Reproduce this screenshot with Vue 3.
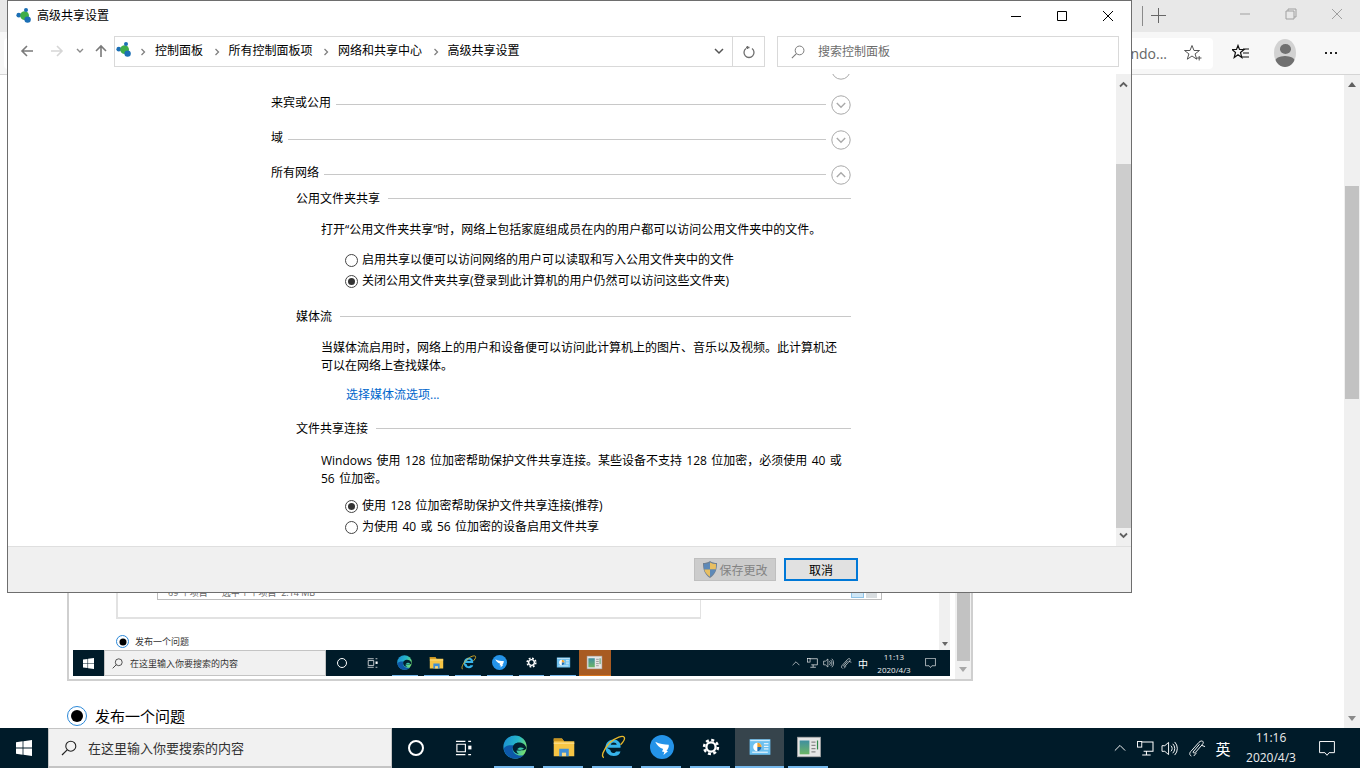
<script setup>
const crumbs = ['控制面板', '所有控制面板项', '网络和共享中心', '高级共享设置']
const apps = [
  { id: 'edge', under: true },
  { id: 'folder' },
  { id: 'ie' },
  { id: 'ding' },
  { id: 'gear' },
  { id: 'cpanel', active: true },
  { id: 'appwin', attention: true },
]
</script>

<template>
  <div class="screen">
    <svg class="defs" width="0" height="0">
      <defs>
        <linearGradient id="edgeG" x1="0" y1="0" x2="1" y2="0.4">
          <stop offset="0" stop-color="#1a8ad4" />
          <stop offset="0.6" stop-color="#25b6c9" />
          <stop offset="1" stop-color="#6fdc76" />
        </linearGradient>
        <linearGradient id="appG" x1="0" y1="0" x2="0" y2="1">
          <stop offset="0" stop-color="#3f8fa0" />
          <stop offset="1" stop-color="#6cb565" />
        </linearGradient>
        <symbol id="net" viewBox="0 0 16 16">
          <circle cx="2.8" cy="7.2" r="2.4" fill="#1b6fb5" />
          <circle cx="8.6" cy="7.6" r="4.4" fill="#3fae49" />
          <circle cx="10" cy="2" r="2" fill="#1b6fb5" />
          <circle cx="11.6" cy="11.6" r="3.2" fill="#1b6fb5" />
        </symbol>
        <symbol id="cdown" viewBox="0 0 20 20">
          <circle cx="10" cy="10" r="9.2" fill="#fff" stroke="#a9a9a9" />
          <path d="M5.8 8l4.2 4.2L14.2 8" fill="none" stroke="#a9a9a9" stroke-width="1.4" />
        </symbol>
        <symbol id="cup" viewBox="0 0 20 20">
          <circle cx="10" cy="10" r="9.2" fill="#fff" stroke="#a9a9a9" />
          <path d="M5.8 12L10 7.8 14.2 12" fill="none" stroke="#a9a9a9" stroke-width="1.4" />
        </symbol>
        <symbol id="win" viewBox="0 0 16 16">
          <path d="M0 2.2l6.6-.9v6.3H0zM7.4 1.2L16 0v7.6H7.4zM0 8.4h6.6v6.3L0 13.8zM7.4 8.4H16V16l-8.6-1.2z" fill="#fff" />
        </symbol>
        <symbol id="mag" viewBox="0 0 16 16">
          <circle cx="9.8" cy="6.2" r="5" fill="none" stroke="currentColor" stroke-width="1.1" />
          <path d="M6.2 9.8L1 15" stroke="currentColor" stroke-width="1.2" />
        </symbol>
        <symbol id="taskview" viewBox="0 0 18 16">
          <path d="M1 1h10M1 15h10M2 4h9v8H2z" fill="none" stroke="#fff" stroke-width="1.2" />
          <path d="M14 1h3M14 15h3" stroke="#fff" stroke-width="1.2" />
          <rect x="14" y="5.5" width="3.4" height="4" fill="#fff" />
        </symbol>
        <symbol id="edge" viewBox="0 0 32 32">
          <circle cx="16" cy="16" r="15.5" fill="url(#edgeG)" />
          <path d="M1 18c1 8 7 13.500 15 13.500 5 0 9-2 12-5-4 1.500-9 1-12-1.500-4-3-4-8-1-11-6-1-12 0-14 4z" fill="#0d58a8" />
          <path d="M13 17c0-4 4-7 8-7 4.500 0 9 2.500 10 7 .3 3-4 3.500-8 3.500h-5c0 2.500 2 4 4 4.500-5 .5-9-3-9-8z" fill="#02202f" />
          <path d="M19 19c2-3 6-3 9-1-2 2-6 2.500-9 1z" fill="#39c6a8" />
        </symbol>
        <symbol id="folder" viewBox="-3 -3 38 33">
          <path d="M1 1h12l3 4h15v22H1z" fill="#f6c544" />
          <path d="M1 1h12l3 4H1z" fill="#c99320" />
          <path d="M1 7h30v2H1z" fill="#fbdc85" />
          <path d="M9 16h14v11h-4v-5h-6v5H9z" fill="#3d8ed8" />
          <path d="M13 22h6v5h-6z" fill="#f4d98a" />
        </symbol>
        <symbol id="ie" viewBox="0 0 32 32">
          <path d="M8 17h18c1-7-4-11-9-11-6 0-11 4-11 11s5 11 11 11c5 0 8-2 9-6h-6c-1 1.500-2 2-3.500 2-2.500 0-4-2-4-4z" fill="#37b4ea" />
          <path d="M13 13c.5-2 2-3 4-3s3.500 1 4 3z" fill="#02202f" />
          <path d="M4 30C0 30 2 20 12 10 20 3 29 0 31 3c1.500 3-3 8-5 10" fill="none" stroke="#e9b92a" stroke-width="1.800" />
        </symbol>
        <symbol id="ding" viewBox="0 0 32 32">
          <circle cx="16" cy="16" r="16" fill="#2493e8" />
          <path d="M7 9c6 3 12 4 18 4 .5 3-1 6-3 8l2 .5-6 5 1-4-3-.5 1.500-3.500C12 17 9 13 7 9z" fill="#fff" />
        </symbol>
        <symbol id="gear" viewBox="-5 -5 34 34">
          <circle cx="12" cy="12" r="6.500" fill="none" stroke="#fff" stroke-width="3.200" />
          <circle cx="12" cy="12" r="9.800" fill="none" stroke="#fff" stroke-width="3.600" stroke-dasharray="4.200 3.500" />
        </symbol>
        <symbol id="cpanel" viewBox="-4 -6 40 36">
          <rect width="32" height="24" fill="#6cc0ef" />
          <rect x="1" y="1" width="30" height="2" fill="#cfeafa" />
          <circle cx="12" cy="12" r="6.500" fill="#fff" />
          <path d="M12 12V5.500a6.500 6.500 0 0 1 6.500 6.500z" fill="#f0a22e" />
          <path d="M12 12h6.500a6.500 6.500 0 0 1-6.500 6.500z" fill="#1f6fb5" />
          <path d="M22 7h7M22 11h7M22 15h7M4 20h24" stroke="#fff" stroke-width="1.500" />
        </symbol>
        <symbol id="appwin" viewBox="-2 -2 32 28">
          <rect width="28" height="24" fill="#e6e6e6" stroke="#aaa" />
          <rect x="2.500" y="4" width="12" height="17" fill="url(#appG)" />
          <path d="M17 6h5M17 10h5M17 14h5M17 18h5" stroke="#8a8a8a" stroke-width="1.500" />
          <path d="M24.500 4v11" stroke="#2e8a4a" stroke-width="1.500" />
        </symbol>
        <symbol id="tray-up" viewBox="0 0 14 8">
          <path d="M1 7l6-6 6 6" fill="none" stroke="#fff" stroke-width="1.100" />
        </symbol>
        <symbol id="tray-net" viewBox="0 0 18 16">
          <path d="M3 1h14v10H7M10 11v3.500M5.500 15h9" fill="none" stroke="#fff" stroke-width="1.100" />
          <rect x="0.500" y="0.500" width="4.500" height="6" fill="#001b2a" stroke="#fff" />
        </symbol>
        <symbol id="tray-vol" viewBox="0 0 18 16">
          <path d="M1 5h3l4-3.500v13L4 11H1zM10.500 5a4 4 0 0 1 0 6M12.500 3a7 7 0 0 1 0 10M14.500 1a10 10 0 0 1 0 14" fill="none" stroke="#fff" stroke-width="1" />
        </symbol>
        <symbol id="tray-pen" viewBox="0 0 18 18">
          <path d="M2.500 17c-2.500-1-2-4 0-5.500l8-9c1.500-1.700 4-2 4.500-.5.500 1.200-.5 2.500-1.500 3.500l-6.500 7.500c-1 1-2.500 1-2.800-.2l7-8.300M5 17l3-3.500M13 5.500l4 1.500" fill="none" stroke="#fff" stroke-width="1" />
        </symbol>
        <symbol id="tray-msg" viewBox="0 0 18 17">
          <path d="M.6.600h16.800v12.600h-6l-2.400 3-2.400-3h-6z" fill="none" stroke="#fff" stroke-width="1.100" />
        </symbol>
      </defs>
    </svg>

    <div class="browser">
      <div class="tabstrip">
        <span class="tab-sep"></span>
        <svg class="tab-plus" width="15" height="15" viewBox="0 0 15 15"><path d="M7.500 0v15M0 7.500h15" stroke="#666" /></svg>
        <div class="win-btns">
          <svg width="12" height="12" viewBox="0 0 12 12"><path d="M1 6h10" stroke="#a0a0a0" /></svg>
          <svg width="12" height="12" viewBox="0 0 12 12"><path d="M3 3V1h8v8H9M1 3h8v8H1z" fill="none" stroke="#a0a0a0" /></svg>
          <svg width="12" height="12" viewBox="0 0 12 12"><path d="M1 1l10 10M11 1L1 11" stroke="#a0a0a0" /></svg>
        </div>
      </div>
      <div class="toolbar">
        <div class="urlbar">
          <span class="url-text">ndo...</span>
          <svg class="url-star" width="18" height="18" viewBox="0 0 18 18"><path d="M8 1.500l2 5h5.500l-4.400 3.400 1.600 5.300L8 12l-4.700 3.200 1.600-5.300L.5 6.500H6z" fill="none" stroke="#555" /><path d="M13 14h4.500M15.200 12v4.500" stroke="#555" /></svg>
        </div>
        <svg class="fav" width="18" height="18" viewBox="0 0 18 18"><path d="M6 1.500l1.500 4H12L8.500 8.500l1.300 5L6 10.800 2.200 13.500l1.300-5L0 5.500h4.500z" fill="none" stroke="#111" stroke-width="1.200" /><path d="M11 5h6M11 9h6M10 13h7" stroke="#111" /></svg>
        <div class="avatar">
          <span class="avatar-head"></span>
          <span class="avatar-body"></span>
        </div>
        <div class="more"><i></i><i></i><i></i></div>
      </div>
      <div class="page">
        <div class="page-main">
          <div class="shot">
            <div class="shot-main">
              <div class="shot-top">
                <div class="shot-doc">
                  <div class="frame">
                    <div class="status">
                      <span>69 个项目</span>
                      <span>选中 1 个项目&nbsp; 2.14 MB</span>
                      <span class="status-views"><i class="on"></i><i></i></span>
                    </div>
                  </div>
                  <div class="small-radio">
                    <span class="radio-blue"></span>
                    发布一个问题
                  </div>
                </div>
                <div class="mini-scroll"><span class="tri-down"></span></div>
              </div>
              <div class="taskbar small">
                <div class="start"><svg width="11" height="11"><use href="#win" /></svg></div>
                <div class="search">
                  <svg width="11" height="11"><use href="#mag" /></svg>
                  <span>在这里输入你要搜索的内容</span>
                </div>
                <div class="tb-btn sys"><span class="cortana"></span></div>
                <div class="tb-btn sys"><svg width="11" height="10"><use href="#taskview" /></svg></div>
                <div
                  v-for="app in apps"
                  :key="app.id"
                  class="tb-btn app"
                  :class="{ attention: app.attention }"
                >
                  <svg class="app-icon"><use :href="'#' + app.id" /></svg>
                </div>
                <div class="tray">
                  <svg class="t-up"><use href="#tray-up" /></svg>
                  <svg class="t-net"><use href="#tray-net" /></svg>
                  <svg class="t-vol"><use href="#tray-vol" /></svg>
                  <svg class="t-pen"><use href="#tray-pen" /></svg>
                  <span class="ime">中</span>
                  <div class="clock"><div>11:13</div><div>2020/4/3</div></div>
                  <svg class="t-msg"><use href="#tray-msg" /></svg>
                </div>
              </div>
            </div>
            <div class="shot-scroll">
              <span class="thumb"></span>
              <span class="tri-down"></span>
            </div>
          </div>
          <div class="big-radio">
            <span class="radio-blue"></span>
            发布一个问题
          </div>
        </div>
        <div class="page-scroll">
          <span class="tri-up"></span>
          <span class="page-thumb"></span>
          <span class="tri-down"></span>
        </div>
      </div>
    </div>

    <div class="taskbar">
      <div class="start"><svg width="16" height="16"><use href="#win" /></svg></div>
      <div class="search">
        <svg width="16" height="16"><use href="#mag" /></svg>
        <span>在这里输入你要搜索的内容</span>
      </div>
      <div class="tb-btn sys"><span class="cortana"></span></div>
      <div class="tb-btn sys"><svg width="17" height="16"><use href="#taskview" /></svg></div>
      <div
        v-for="app in apps"
        :key="app.id"
        class="tb-btn app"
        :class="{ active: app.active }"
      >
        <svg class="app-icon"><use :href="'#' + app.id" /></svg>
      </div>
      <div class="tray">
        <svg class="t-up"><use href="#tray-up" /></svg>
        <svg class="t-net"><use href="#tray-net" /></svg>
        <svg class="t-vol"><use href="#tray-vol" /></svg>
        <svg class="t-pen"><use href="#tray-pen" /></svg>
        <span class="ime">英</span>
        <div class="clock"><div>11:16</div><div>2020/4/3</div></div>
        <svg class="t-msg"><use href="#tray-msg" /></svg>
      </div>
    </div>

    <div class="dialog">
      <div class="titlebar">
        <svg width="16" height="16"><use href="#net" /></svg>
        <span class="title">高级共享设置</span>
        <div class="caption">
          <svg width="12" height="12" viewBox="0 0 12 12"><path d="M1 6.500h10" stroke="#000" /></svg>
          <svg width="12" height="12" viewBox="0 0 12 12"><path d="M1.500 1.500h9v9h-9z" fill="none" stroke="#000" /></svg>
          <svg width="12" height="12" viewBox="0 0 12 12"><path d="M1 1l10 10M11 1L1 11" stroke="#000" /></svg>
        </div>
      </div>

      <div class="navbar">
        <svg class="nav-back" width="14" height="14" viewBox="0 0 14 14"><path d="M13 7H2M7 2L2 7l5 5" fill="none" stroke="#7a7a7a" stroke-width="1.600" /></svg>
        <svg class="nav-fwd" width="14" height="14" viewBox="0 0 14 14"><path d="M1 7h11M7 2l5 5-5 5" fill="none" stroke="#d6d6d6" stroke-width="1.600" /></svg>
        <svg class="nav-drop" width="8" height="6" viewBox="0 0 8 6"><path d="M1 1l3 3 3-3" fill="none" stroke="#8a8a8a" stroke-width="1.400" /></svg>
        <svg class="nav-up" width="14" height="14" viewBox="0 0 14 14"><path d="M7 13V2M2 7l5-5 5 5" fill="none" stroke="#7a7a7a" stroke-width="1.600" /></svg>
        <div class="address">
          <svg class="addr-icon" width="16" height="16"><use href="#net" /></svg>
          <template v-for="c in crumbs" :key="c">
            <svg class="crumb-sep" width="6" height="8" viewBox="0 0 6 8"><path d="M1.500 1l3 3-3 3" fill="none" stroke="#808080" stroke-width="1.300" /></svg>
            <span class="crumb">{{ c }}</span>
          </template>
          <svg class="addr-drop" width="10" height="7" viewBox="0 0 10 7"><path d="M1 1l4 4 4-4" fill="none" stroke="#555" stroke-width="1.500" /></svg>
          <div class="refresh">
            <svg width="12" height="14" viewBox="0 0 12 14"><path d="M3 2.500h3.500M4.500 1v3M9 3.500A5 5 0 1 1 3 3.500" fill="none" stroke="#6e6e6e" stroke-width="1.300" /></svg>
          </div>
        </div>
        <div class="searchbox">
          <svg class="search-mag" width="14" height="14"><use href="#mag" /></svg>
          <span>搜索控制面板</span>
        </div>
      </div>

      <div class="body">
        <div class="content">
          <div class="group clipped">
            <span class="line"></span>
            <svg class="toggle"><use href="#cdown" /></svg>
          </div>
          <div class="group">
            <span class="group-name">来宾或公用</span>
            <span class="line"></span>
            <svg class="toggle"><use href="#cdown" /></svg>
          </div>
          <div class="group">
            <span class="group-name">域</span>
            <span class="line"></span>
            <svg class="toggle"><use href="#cdown" /></svg>
          </div>
          <div class="group">
            <span class="group-name">所有网络</span>
            <span class="line"></span>
            <svg class="toggle"><use href="#cup" /></svg>
          </div>

          <div class="section first">
            <div class="sec-head"><span>公用文件夹共享</span><span class="line"></span></div>
            <p class="para">打开“公用文件夹共享”时，网络上包括家庭组成员在内的用户都可以访问公用文件夹中的文件。</p>
            <div class="options">
              <label class="opt"><span class="radio"></span>启用共享以便可以访问网络的用户可以读取和写入公用文件夹中的文件</label>
              <label class="opt"><span class="radio checked"></span>关闭公用文件夹共享(登录到此计算机的用户仍然可以访问这些文件夹)</label>
            </div>
          </div>

          <div class="section media">
            <div class="sec-head"><span>媒体流</span><span class="line"></span></div>
            <p class="para">当媒体流启用时，网络上的用户和设备便可以访问此计算机上的图片、音乐以及视频。此计算机还可以在网络上查找媒体。</p>
            <a class="link">选择媒体流选项...</a>
          </div>

          <div class="section conn">
            <div class="sec-head"><span>文件共享连接</span><span class="line"></span></div>
            <p class="para">Windows 使用 128 位加密帮助保护文件共享连接。某些设备不支持 128 位加密，必须使用 40 或 56 位加密。</p>
            <div class="options">
              <label class="opt"><span class="radio checked"></span>使用 128 位加密帮助保护文件共享连接(推荐)</label>
              <label class="opt"><span class="radio"></span>为使用 40 或 56 位加密的设备启用文件共享</label>
            </div>
          </div>
        </div>
        <div class="vscroll">
          <svg width="9" height="7" viewBox="0 0 9 7"><path d="M1 5.500l3.500-3.500L8 5.500" fill="none" stroke="#606060" stroke-width="1.800" /></svg>
          <span class="vthumb"></span>
          <svg width="9" height="7" viewBox="0 0 9 7"><path d="M1 1.500L4.500 5 8 1.500" fill="none" stroke="#606060" stroke-width="1.800" /></svg>
        </div>
      </div>

      <div class="footer">
        <button class="btn save">
          <svg width="16" height="17" viewBox="0 0 16 17">
            <path d="M8 0c2 1.500 4.500 2 7 2 0 6-1 11-7 15C2 13 1 8 1 2c2.500 0 5-.5 7-2z" fill="#6f7f92" />
            <path d="M8 1.500V8.500H2.200C2 6.500 2 5 2 3c2 0 4-.5 6-1.500z" fill="#5d89b8" />
            <path d="M8 1.500c2 1 4 1.500 6 1.500 0 2 0 3.500-.3 5.500H8z" fill="#e8bf62" />
            <path d="M8 8.500h5.700C13 11.500 11 14 8 15.800z" fill="#5d89b8" />
            <path d="M8 8.500v7.300C5 14 3 11.500 2.300 8.500z" fill="#e8bf62" />
          </svg>
          保存更改
        </button>
        <button class="btn cancel">取消</button>
      </div>
    </div>
  </div>
</template>

<style scoped>
.screen {
  position: relative;
  width: 1360px;
  height: 768px;
  overflow: hidden;
  display: flex;
  flex-direction: column;
  background: #fff;
  color: #000;
  font-family: "Open Sans", "Noto Sans CJK SC", sans-serif;
  font-size: 12px;
}

.defs {
  position: absolute;
}

svg {
  display: block;
  flex: none;
}

/* browser behind the dialog */
.browser {
  flex: 1;
  min-height: 0;
  display: flex;
  flex-direction: column;
}

.tabstrip {
  height: 32px;
  background: #e8e8e8;
  display: flex;
  align-items: center;
  padding-left: 1142px;
}

.tab-sep {
  width: 1px;
  height: 20px;
  background: #8a8a8a;
}

.tab-plus {
  margin-left: 8px;
  margin-top: -2px;
}

.win-btns {
  margin-left: auto;
  margin-right: 17px;
  margin-top: -4px;
  display: flex;
  gap: 34px;
}

.toolbar {
  height: 43px;
  box-sizing: border-box;
  background: #f7f7f7;
  border-bottom: 1px solid #d5d5d5;
  display: flex;
  align-items: center;
}

.urlbar {
  width: 1209px;
  height: 31px;
  margin-left: 4px;
  background: #fff;
  border-radius: 4px;
  display: flex;
  align-items: center;
  justify-content: flex-end;
  padding-right: 11px;
  box-sizing: border-box;
}

.url-text {
  font-size: 14px;
  color: #666;
  margin-right: 17px;
}

.fav {
  margin-left: 19px;
}

.avatar {
  width: 22px;
  height: 28px;
  margin-left: 24px;
  border-radius: 50%;
  background: #d2d2d2;
  overflow: hidden;
  display: flex;
  flex-direction: column;
  align-items: center;
}

.avatar-head {
  width: 11px;
  height: 12px;
  margin-top: 5px;
  border-radius: 50%;
  background: #707070;
}

.avatar-body {
  width: 20px;
  height: 14px;
  margin-top: 2px;
  border-radius: 50%;
  background: #707070;
}

.more {
  margin-left: 29px;
  display: flex;
  gap: 3px;
}

.more i {
  width: 2px;
  height: 2px;
  background: #222;
}

.page {
  flex: 1;
  min-height: 0;
  display: flex;
}

.page-main {
  flex: 1;
  min-width: 0;
  padding-left: 67px;
}

.page-scroll {
  width: 16px;
  background: #f0f0f0;
  display: flex;
  flex-direction: column;
  align-items: center;
  padding: 7px 0;
  box-sizing: border-box;
}

.page-thumb {
  width: 14px;
  height: 213px;
  margin-top: 99px;
  margin-bottom: auto;
  background: #c2c2c2;
}

.tri-up,
.tri-down {
  width: 0;
  height: 0;
  border-left: 4px solid transparent;
  border-right: 4px solid transparent;
}

.tri-up {
  border-bottom: 5px solid #606060;
}

.tri-down {
  border-top: 5px solid #8a8a8a;
}

/* screenshot embedded in the page */
.shot {
  width: 906px;
  height: 606px;
  box-sizing: border-box;
  border: 2px solid #cfcfcf;
  border-top: none;
  display: flex;
  background: #fff;
}

.shot-main {
  flex: 1;
  min-width: 0;
  display: flex;
  flex-direction: column;
  padding: 0 5px 3px 4px;
}

.shot-top {
  flex: 1;
  min-height: 0;
  display: flex;
}

.shot-doc {
  flex: 1;
  display: flex;
  flex-direction: column;
  justify-content: flex-end;
}

.frame {
  width: 585px;
  height: 400px;
  margin-left: 43px;
  border: 1px solid #e2e2e2;
  border-top: none;
  border-width: 0 1px 2px 2px;
  box-sizing: border-box;
  display: flex;
  flex-direction: column;
  justify-content: flex-end;
  padding-bottom: 17px;
}

.status {
  width: 725px;
  height: 14px;
  margin-left: 39px;
  box-sizing: border-box;
  border: 1px solid #bdbdbd;
  border-top: none;
  padding-left: 10px;
  display: flex;
  align-items: center;
  gap: 14px;
  font-size: 9px;
  line-height: 12px;
  color: #666;
  background: #fff;
}

.status-views {
  display: flex;
  gap: 2px;
  margin-left: auto;
  margin-right: 4px;
}

.status-views i {
  width: 11px;
  height: 11px;
  background: #d8dde0;
}

.status-views i.on {
  width: 13px;
  background: #cfe6f5;
  border: 1px solid #8fc4e8;
  box-sizing: border-box;
}

.small-radio {
  height: 31px;
  margin-left: 43px;
  padding-top: 14px;
  box-sizing: border-box;
  display: flex;
  align-items: center;
  gap: 6px;
  font-size: 9px;
  color: #333;
}

.small-radio .radio-blue {
  width: 13px;
  height: 13px;
  border-width: 1px;
}

.small-radio .radio-blue::after {
  width: 7px;
  height: 7px;
}

.radio-blue {
  position: relative;
  display: block;
  width: 20px;
  height: 20px;
  box-sizing: border-box;
  border: 1.500px solid #2b88d8;
  border-radius: 50%;
  background: #fff;
}

.radio-blue::after {
  content: "";
  position: absolute;
  left: 50%;
  top: 50%;
  width: 12px;
  height: 12px;
  transform: translate(-50%, -50%);
  border-radius: 50%;
  background: #000;
}

.mini-scroll {
  width: 11px;
  background: #f0f0f0;
  display: flex;
  flex-direction: column;
  justify-content: flex-end;
  align-items: center;
  padding-bottom: 4px;
}

.mini-scroll .tri-down {
  border-left-width: 3px;
  border-right-width: 3px;
  border-top-width: 4px;
  border-top-color: #666;
}

.shot-scroll {
  width: 16px;
  background: #f0f0f0;
  display: flex;
  flex-direction: column;
  align-items: center;
  justify-content: flex-end;
  padding-bottom: 7px;
  box-sizing: border-box;
}

.thumb {
  width: 13px;
  flex: 1;
  margin-bottom: 6px;
  background: #c2c2c2;
}

.shot-scroll .tri-down {
  border-top-color: #a8a8a8;
}

.big-radio {
  display: flex;
  align-items: center;
  gap: 8px;
  margin-top: 24px;
  font-size: 15px;
}

/* taskbars */
.taskbar {
  height: 40px;
  flex: none;
  display: flex;
  align-items: stretch;
  background: #001b29;
}

.start {
  width: 48px;
  display: flex;
  align-items: center;
  justify-content: center;
}

.search {
  width: 344px;
  box-sizing: border-box;
  background: #f1f1f1;
  border: 1px solid #c4c4c4;
  border-bottom-width: 2px;
  display: flex;
  align-items: center;
  padding-left: 12px;
  gap: 11px;
  font-size: 13px;
  color: #333;
}

.search svg {
  color: #222;
}

.tb-btn {
  width: 48px;
  display: flex;
  align-items: center;
  justify-content: center;
  position: relative;
}

.cortana {
  width: 16px;
  height: 16px;
  box-sizing: border-box;
  border: 2px solid #fff;
  border-radius: 50%;
}

.tb-btn.sys + .tb-btn.app {
  margin-left: 2px;
}

.tb-btn.sys svg {
  margin-left: -2px;
}

.tb-btn.app {
  width: 49px;
  padding-bottom: 3px;
  box-sizing: border-box;
}

.tb-btn.app::after {
  content: "";
  position: absolute;
  left: 4px;
  right: 5px;
  bottom: 0;
  height: 2px;
  background: #76b9ed;
}

.tb-btn.active {
  background: #36444c;
}

.tb-btn.active::after {
  left: 0;
  right: 0;
}

.app-icon {
  width: 26px;
  height: 24px;
}

.tray {
  margin-left: auto;
  display: flex;
  align-items: center;
  color: #fff;
  padding-right: 25px;
}

.t-up {
  width: 12px;
  height: 8px;
  margin-right: 11px;
}

.t-net {
  width: 17px;
  height: 15px;
  margin-right: 7px;
}

.t-vol {
  width: 17px;
  height: 15px;
  margin-right: 11px;
}

.t-pen {
  width: 17px;
  height: 17px;
  margin-right: 9px;
}

.ime {
  font-size: 15px;
  width: 16px;
  text-align: center;
}

.clock {
  width: 76px;
  margin-left: 2px;
  text-align: center;
  font-size: 12px;
  line-height: 20px;
  color: #eee;
}

.t-msg {
  width: 16px;
  height: 15px;
  margin-left: 10px;
}

/* the same taskbar, photographed smaller */
.taskbar.small {
  height: 26px;
}

.small .start {
  width: 31px;
}

.small .search {
  width: 222px;
  padding-left: 7px;
  gap: 7px;
  font-size: 9px;
  border-width: 1px;
}

.small .tb-btn {
  width: 31px;
}

.small .cortana {
  width: 10px;
  height: 10px;
  border-width: 1.500px;
}

.small .tb-btn.app {
  width: 31.700px;
  padding-bottom: 1px;
}

.small .tb-btn.sys + .tb-btn.app {
  margin-left: 1px;
}

.small .tb-btn.sys svg {
  margin-left: -1px;
}

.small .tb-btn.app::after {
  left: 3px;
  right: 3px;
  height: 1px;
}

.small .tb-btn.attention {
  background: #a85b22;
}

.small .tb-btn.attention::after {
  left: 0;
  right: 0;
  background: #d8741c;
}

.small .app-icon {
  width: 17px;
  height: 15px;
}

.small .tray {
  padding-right: 14px;
}

.small .t-up {
  width: 8px;
  height: 5px;
  margin-right: 7px;
}

.small .t-net {
  width: 11px;
  height: 10px;
  margin-right: 5px;
}

.small .t-vol {
  width: 11px;
  height: 10px;
  margin-right: 7px;
}

.small .t-pen {
  width: 11px;
  height: 11px;
  margin-right: 6px;
}

.small .ime {
  font-size: 10px;
  width: 10px;
}

.small .clock {
  width: 50px;
  margin-left: 1px;
  font-size: 8px;
  line-height: 13px;
}

.small .t-msg {
  width: 11px;
  height: 10px;
  margin-left: 6px;
}

/* dialog window on top */
.dialog {
  position: absolute;
  left: 7px;
  top: 0;
  width: 1125px;
  height: 593px;
  box-sizing: border-box;
  border: 1px solid #6e6e6e;
  background: #fff;
  display: flex;
  flex-direction: column;
}

.titlebar {
  height: 30px;
  flex: none;
  display: flex;
  align-items: center;
  padding-left: 8px;
}

.title {
  margin-left: 5px;
  margin-bottom: 2px;
  font-size: 12px;
}

.caption {
  margin-left: auto;
  margin-right: 17px;
  display: flex;
  gap: 34px;
}

.navbar {
  height: 43px;
  flex: none;
  display: flex;
  align-items: flex-start;
  padding-top: 5px;
  box-sizing: border-box;
}

.nav-back {
  margin: 8px 0 0 12px;
}

.nav-fwd {
  margin: 8px 0 0 16px;
}

.nav-drop {
  margin: 12px 0 0 12px;
}

.nav-up {
  margin: 8px 0 0 10px;
}

.address {
  width: 651px;
  height: 31px;
  margin-left: 6px;
  box-sizing: border-box;
  border: 1px solid #d9d9d9;
  display: flex;
  align-items: center;
  padding-left: 1px;
  position: relative;
}

.crumb-sep {
  margin: 0 9px 0 8px;
}

.addr-icon {
  margin-bottom: 4px;
}

.crumb {
  margin-right: 2.500px;
  margin-bottom: 3px;
}

.addr-drop {
  margin-left: auto;
  margin-right: 8px;
}

.refresh {
  width: 31px;
  height: 29px;
  border-left: 1px solid #d9d9d9;
  display: flex;
  align-items: center;
  justify-content: center;
}

.searchbox {
  width: 342px;
  height: 31px;
  margin-left: 12px;
  box-sizing: border-box;
  border: 1px solid #d9d9d9;
  display: flex;
  align-items: center;
  padding-left: 13px;
  gap: 13px;
  color: #6d6d6d;
}

.searchbox span {
  margin-bottom: 2px;
}

.search-mag {
  color: #777;
}

.body {
  flex: 1;
  min-height: 0;
  display: flex;
  overflow: hidden;
}

.content {
  flex: 1;
  min-width: 0;
  padding-left: 263px;
  overflow: hidden;
}

.group {
  width: 580px;
  height: 35px;
  display: flex;
  align-items: center;
  gap: 5px;
}

.group-name {
  margin-bottom: 5px;
}

.clipped {
  margin-top: -22px;
}

.clipped .line {
  visibility: hidden;
}

.line {
  flex: 1;
  height: 1px;
  background: #c8c8c8;
}

.toggle {
  width: 20px;
  height: 20px;
}

.section {
  width: 555px;
  margin-left: 25px;
}

.section.first {
  margin-top: -3px;
}

.section.media {
  margin-top: 18px;
}

.section.conn {
  margin-top: 15px;
}

.sec-head {
  height: 18px;
  display: flex;
  align-items: center;
  gap: 8px;
}

.para {
  margin: 14px 0 0 25px;
  width: 525px;
  line-height: 18px;
  word-spacing: 1.300px;
}

.conn .para {
  margin-top: 15px;
}

.options {
  margin: 11px 0 0 49px;
  display: flex;
  flex-direction: column;
  gap: 3px;
  word-spacing: 1.300px;
}

.conn .options {
  margin-top: 8px;
}

.opt {
  height: 18px;
  display: flex;
  align-items: center;
  gap: 4px;
}

.radio {
  width: 13px;
  height: 13px;
  box-sizing: border-box;
  border: 1px solid #444;
  border-radius: 50%;
  background: #fff;
  flex: none;
  margin-top: 2px;
  position: relative;
}

.radio.checked::after {
  content: "";
  position: absolute;
  left: 2px;
  top: 2px;
  width: 7px;
  height: 7px;
  border-radius: 50%;
  background: #333;
}

.link {
  display: block;
  margin: 11px 0 0 50px;
  line-height: 18px;
  color: #0066cc;
}

.vscroll {
  width: 15px;
  flex: none;
  background: #f0f0f0;
  display: flex;
  flex-direction: column;
  align-items: center;
  padding: 7px 0;
  box-sizing: border-box;
}

.vthumb {
  width: 15px;
  height: 364px;
  margin-top: 76px;
  margin-bottom: auto;
  background: #cdcdcd;
}

.footer {
  height: 46px;
  flex: none;
  box-sizing: border-box;
  background: #f0f0f0;
  border-top: 1px solid #dfdfdf;
  display: flex;
  align-items: center;
  justify-content: flex-end;
  gap: 8px;
  padding-right: 273px;
}

.btn {
  height: 23px;
  box-sizing: border-box;
  font: inherit;
  display: flex;
  align-items: center;
  justify-content: center;
  padding: 0;
}

.save {
  width: 82px;
  gap: 1px;
  background: #cccccc;
  border: 1px solid #bfbfbf;
  color: #838383;
}

.cancel {
  width: 74px;
  background: #e1e1e1;
  border: 2px solid #0078d7;
  color: #000;
}
</style>

<style>
html,
body {
  margin: 0;
  overflow: hidden;
  background: #fff;
}
</style>
